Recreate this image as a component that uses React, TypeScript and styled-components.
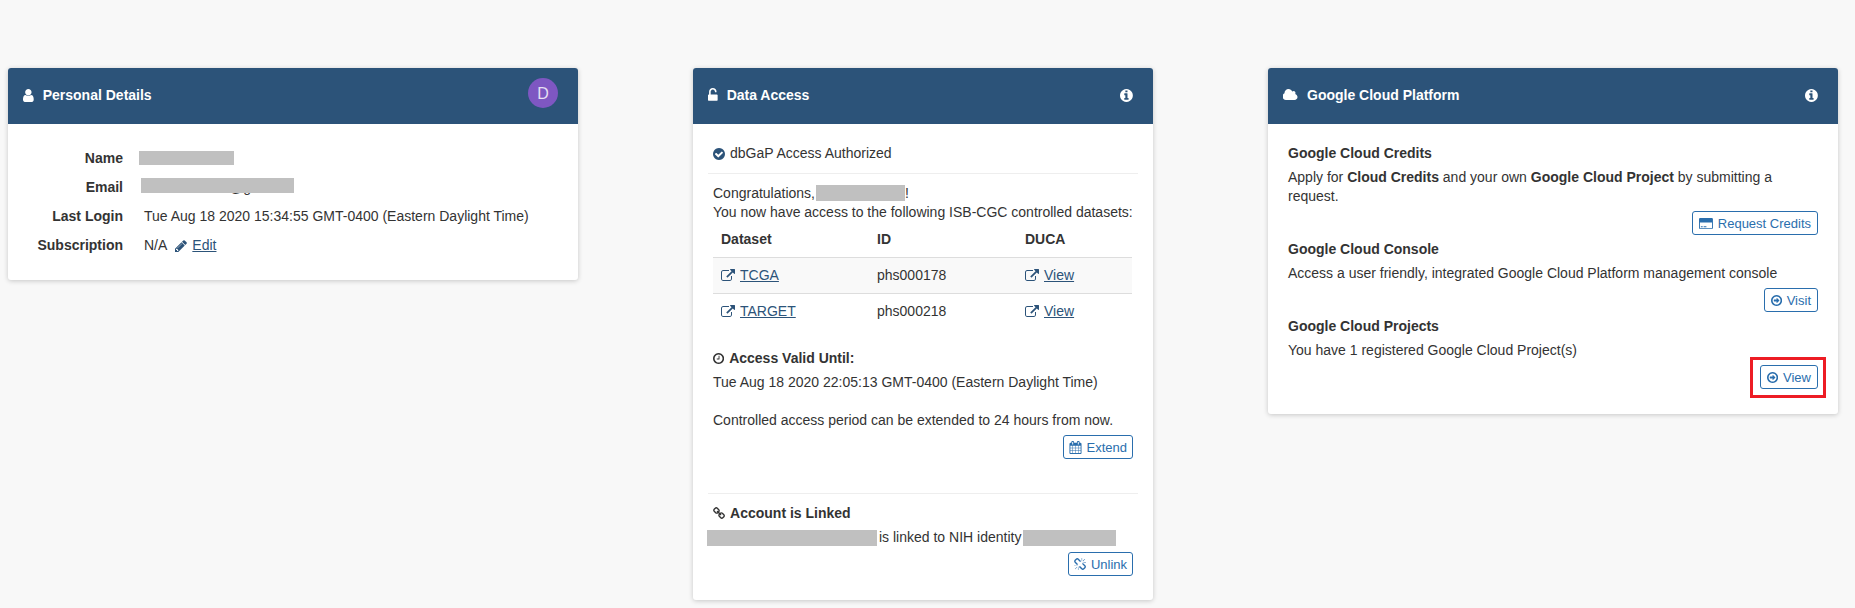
import styled, { createGlobalStyle } from 'styled-components';

// font awesome 4 glyphs: [left edge, width, path], all in the 1792 unit grid
const glyphs = {
  user: [256, 1280, 'M1536 1399q0 109-62.5 187t-150.5 78h-854q-88 0-150.5-78t-62.5-187q0-85 8.5-160.5t31.5-152 58.5-131 94-89 134.5-34.5q131 128 313 128t313-128q76 0 134.5 34.5t94 89 58.5 131 31.5 152 8.5 160.5zm-256-887q0 159-112.5 271.5t-271.5 112.5-271.5-112.5-112.5-271.5 112.5-271.5 271.5-112.5 271.5 112.5 112.5 271.5z'],
  unlock: [320, 1152, 'M1376 768q40 0 68 28t28 68v576q0 40-28 68t-68 28h-960q-40 0-68-28t-28-68v-576q0-40 28-68t68-28h32v-320q0-185 131.5-316.5t316.5-131.5 316.5 131.5 131.5 316.5q0 26-19 45t-45 19h-64q-26 0-45-19t-19-45q0-106-75-181t-181-75-181 75-75 181v320h736z'],
  info: [128, 1536, 'M1152 1376v-160q0-14-9-23t-23-9h-96v-512q0-14-9-23t-23-9h-320q-14 0-23 9t-9 23v160q0 14 9 23t23 9h96v320h-96q-14 0-23 9t-9 23v160q0 14 9 23t23 9h448q14 0 23-9t9-23zm-128-896v-160q0-14-9-23t-23-9h-192q-14 0-23 9t-9 23v160q0 14 9 23t23 9h192q14 0 23-9t9-23zm640 416q0 209-103 385.5t-279.5 279.5-385.5 103-385.5-103-279.5-279.5-103-385.5 103-385.5 279.5-279.5 385.5-103 385.5 103 279.5 279.5 103 385.5z'],
  check: [128, 1536, 'M1412 734q0-28-18-46l-91-90q-19-19-45-19t-45 19l-408 407-226-226q-19-19-45-19t-45 19l-91 90q-18 18-18 46 0 27 18 45l362 362q19 19 45 19 27 0 46-19l543-543q18-18 18-45zm252 162q0 209-103 385.5t-279.5 279.5-385.5 103-385.5-103-279.5-279.5-103-385.5 103-385.5 279.5-279.5 385.5-103 385.5 103 279.5 279.5 103 385.5z'],
  cloud: [0, 1920, 'M1856 1152q0 159-112.5 271.5t-271.5 112.5h-1088q-185 0-316.5-131.5t-131.5-316.5q0-132 71-241.5t187-163.5q-2-28-2-43 0-212 150-362t362-150q158 0 286.5 88t187.5 230q70-62 166-62 106 0 181 75t75 181q0 75-41 138 129 30 213 134.5t84 239.5z'],
  external: [0, 1792, 'M1408 928v320q0 119-84.5 203.5t-203.5 84.5h-832q-119 0-203.5-84.5t-84.5-203.5v-832q0-119 84.5-203.5t203.5-84.5h704q14 0 23 9t9 23v64q0 14-9 23t-23 9h-704q-66 0-113 47t-47 113v832q0 66 47 113t113 47h832q66 0 113-47t47-113v-320q0-14 9-23t23-9h64q14 0 23 9t9 23zm384-864v512q0 26-19 45t-45 19-45-19l-176-176-652 652q-10 10-23 10t-23-10l-114-114q-10-10-10-23t10-23l652-652-176-176q-19-19-19-45t19-45 45-19h512q26 0 45 19t19 45z'],
  pencil: [128, 1536, 'M491 1536l91-91-235-235-91 91v107h128v128h107zm523-928q0-22-22-22-10 0-17 7l-542 542q-7 7-7 17 0 22 22 22 10 0 17-7l542-542q7-7 7-17zm-54-192l416 416-832 832h-416v-416zm683 96q0 53-37 90l-166 166-416-416 166-165q36-38 90-38 53 0 91 38l235 234q37 39 37 91z'],
  clock: [128, 1536, 'M1024 544v448q0 14-9 23t-23 9h-320q-14 0-23-9t-9-23v-64q0-14 9-23t23-9h224v-352q0-14 9-23t23-9h64q14 0 23 9t9 23zm416 352q0-148-73-273t-198-198-273-73-273 73-198 198-73 273 73 273 198 198 273 73 273-73 198-198 73-273zm224 0q0 209-103 385.5t-279.5 279.5-385.5 103-385.5-103-279.5-279.5-103-385.5 103-385.5 279.5-279.5 385.5-103 385.5 103 279.5 279.5 103 385.5z'],
  link: [64, 1664, 'M1520 1216q0-40-28-68l-208-208q-28-28-68-28-42 0-72 32 3 3 19 18.5t21.5 21.5 15 19 13 25.5 3.5 27.5q0 40-28 68t-68 28q-15 0-27.5-3.5t-25.5-13-19-15-21.5-21.5-18.5-19q-33 31-33 73 0 40 28 68l206 207q27 27 68 27 40 0 68-26l147-146q28-28 28-67zm-703-705q0-40-28-68l-206-207q-28-28-68-28-39 0-68 27l-147 146q-28 28-28 67 0 40 28 68l208 208q27 27 68 27 42 0 72-31-3-3-19-18.5t-21.5-21.5-15-19-13-25.5-3.5-27.5q0-40 28-68t68-28q15 0 27.5 3.5t25.5 13 19 15 21.5 21.5 18.5 19q33-31 33-73zm895 705q0 120-85 203l-147 146q-83 83-203 83-121 0-204-85l-206-207q-83-83-83-203 0-123 88-209l-88-88q-86 88-208 88-120 0-204-84l-208-208q-84-84-84-204t85-203l147-146q83-83 203-83 121 0 204 85l206 207q83 83 83 203 0 123-88 209l88 88q86-88 208-88 120 0 204 84l208 208q84 84 84 204z'],
  calendar: [0, 1664, 'M192 1664h288v-288h-288v288zm352 0h320v-288h-320v288zm-352-352h288v-320h-288v320zm352 0h320v-320h-320v320zm-352-384h288v-288h-288v288zm736 736h320v-288h-320v288zm-384-736h320v-288h-320v288zm768 736h288v-288h-288v288zm-384-352h320v-320h-320v320zm-352-864v-288q0-13-9.5-22.5t-22.5-9.5h-64q-13 0-22.5 9.5t-9.5 22.5v288q0 13 9.5 22.5t22.5 9.5h64q13 0 22.5-9.5t9.5-22.5zm736 864h288v-320h-288v320zm-384-384h320v-288h-320v288zm384 0h288v-288h-288v288zm32-480v-288q0-13-9.5-22.5t-22.5-9.5h-64q-13 0-22.5 9.5t-9.5 22.5v288q0 13 9.5 22.5t22.5 9.5h64q13 0 22.5-9.5t9.5-22.5zm384-64v1280q0 52-38 90t-90 38h-1408q-52 0-90-38t-38-90v-1280q0-52 38-90t90-38h128v-96q0-66 47-113t113-47h64q66 0 113 47t47 113v96h384v-96q0-66 47-113t113-47h64q66 0 113 47t47 113v96h128q52 0 90 38t38 90z'],
  card: [0, 1920, 'M160 128h1600q160 0 160 160v1216q0 160-160 160h-1600q-160 0-160-160v-1216q0-160 160-160z M128 768v736q0 32 32 32h1600q32 0 32-32v-736z M256 1408v-128h256v128z M640 1408v-128h384v128z'],
  arrow: [128, 1536, 'M1280 896q0 14-9 23l-320 320q-9 9-23 9-13 0-22.5-9.5t-9.5-22.5v-192h-352q-13 0-22.5-9.5t-9.5-22.5v-192q0-13 9.5-22.5t22.5-9.5h352v-192q0-14 9-23t23-9q12 0 24 10l319 319q9 9 9 23zm160 0q0-148-73-273t-198-198-273-73-273 73-198 198-73 273 73 273 198 198 273 73 273-73 198-198 73-273zm224 0q0 209-103 385.5t-279.5 279.5-385.5 103-385.5-103-279.5-279.5-103-385.5 103-385.5 279.5-279.5 385.5-103 385.5 103 279.5 279.5 103 385.5z'],
  unlink: [64, 1664, 'M503 1271l-256 256q-10 9-23 9-12 0-23-9-9-10-9-23t9-23l256-256q10-9 23-9t23 9q9 10 9 23t-9 23zm169 41v320q0 14-9 23t-23 9-23-9-9-23v-320q0-14 9-23t23-9 23 9 9 23zm-224-224q0 14-9 23t-23 9h-320q-14 0-23-9t-9-23 9-23 23-9h320q14 0 23 9t9 23zm1264 128q0 120-85 203l-147 146q-83 83-203 83-121 0-204-85l-334-335q-21-21-42-56l239-18 273 274q27 27 68 27.5t68-26.5l147-146q28-28 28-67 0-40-28-68l-274-275 18-239q35 21 56 42l336 336q84 86 84 204zm-617-724l-239 18-273-274q-28-28-68-28-39 0-68 27l-147 146q-28 28-28 67 0 40 28 68l274 274-18 240q-35-21-56-42l-336-336q-84-86-84-204 0-120 85-203l147-146q83-83 203-83 121 0 204 85l334 335q21 21 42 56zm633 84q0 14-9 23t-23 9h-320q-14 0-23-9t-9-23 9-23 23-9h320q14 0 23 9t9 23zm-544-544v320q0 14-9 23t-23 9-23-9-9-23v-320q0-14 9-23t23-9 23 9 9 23zm407 151l-256 256q-11 9-23 9t-23-9q-9-10-9-23t9-23l256-256q10-9 23-9t23 9q9 10 9 23t-9 23z'],
} as const;

const GlobalStyle = createGlobalStyle`
  html, body {
    margin: 0;
    height: 100%;
    background: #f8f8f8;
  }
  body {
    font-family: "Liberation Sans", Arial, sans-serif;
    font-size: 14px;
    line-height: 19px;
    color: #333;
  }
`;

const Page = styled.div`
  display: flex;
  align-items: flex-start;
  gap: 115px;
  padding: 68px 0 0 8px;
`;

const Panel = styled.section<{ $width: number }>`
  width: ${(p) => p.$width}px;
  flex: none;
  background: #fff;
  border-radius: 3px;
  box-shadow: 0 1px 5px rgba(0, 0, 0, 0.2);
`;

const PanelHead = styled.header`
  height: 56px;
  box-sizing: border-box;
  display: flex;
  align-items: center;
  justify-content: space-between;
  padding: 0 20px 2px 15px;
  background: #2c5379;
  border-radius: 3px 3px 0 0;
  color: #fff;
`;

const HeadTitle = styled.h3`
  display: flex;
  align-items: center;
  gap: 9px;
  margin: 0;
  font-size: 14px;
  font-weight: bold;
`;

const Avatar = styled.span`
  width: 30px;
  height: 30px;
  margin-bottom: 4px;
  border-radius: 50%;
  background: #7e57c2;
  color: #e6dff3;
  font-size: 16px;
  display: flex;
  align-items: center;
  justify-content: center;
`;

const DetailsBody = styled.dl`
  display: grid;
  grid-template-columns: 115px 1fr;
  column-gap: 21px;
  grid-auto-rows: 29px;
  align-items: center;
  margin: 0;
  padding: 20px 0;
`;

const Label = styled.dt`
  font-weight: bold;
  text-align: right;
`;

const Value = styled.dd`
  margin: 0;
  display: flex;
  align-items: center;
  gap: 8px;
`;

const EditGroup = styled.span`
  display: flex;
  align-items: center;
  gap: 5px;
`;

const Redact = styled.span<{ $w: number; $h?: number }>`
  display: inline-block;
  flex: none;
  width: ${(p) => p.$w}px;
  height: ${(p) => p.$h ?? 16}px;
  background: #c0c0c0;
  vertical-align: middle;
`;

const NameCover = styled(Redact)`
  margin: -2px 0 0 -5px;
`;

const EmailValue = styled.dd`
  position: relative;
  margin: 0;
  padding-left: 85px;
  height: 19px;
`;

const EmailCover = styled(Redact)`
  position: absolute;
  left: -3px;
  top: 0;
`;

const TextLink = styled.a`
  color: #2c5379;
  text-decoration: underline;
`;

const Body = styled.div`
  padding: 20px 15px 0;
`;

const Indented = styled.div`
  padding: 0 5px;
`;

const Rule = styled.hr`
  border: 0;
  border-top: 1px solid #eee;
  margin: 0;
`;

const Status = styled(Indented)`
  display: flex;
  align-items: center;
  gap: 5px;
  padding-bottom: 10px;
`;

const Paragraphs = styled(Indented)`
  padding-top: 10px;
`;

const NameInline = styled(Redact)`
  margin: -3px 0 0 1px;
`;

const DataTable = styled.table`
  width: 419px;
  margin-left: 5px;
  border-collapse: collapse;
  th,
  td {
    padding: 8px;
    text-align: left;
  }
  th {
    border-bottom: 1px solid #ddd;
  }
  tbody tr:nth-child(odd) {
    background: #f9f9f9;
    border-bottom: 1px solid #ddd;
  }
  th:first-child {
    width: 140px;
  }
  th:nth-child(2) {
    width: 132px;
  }
`;

const CellLink = styled.span`
  display: flex;
  align-items: center;
  gap: 5px;
`;

const SectionTitle = styled.div`
  display: flex;
  align-items: center;
  gap: 5px;
  font-weight: bold;
`;

const ActionRow = styled.div<{ $inset?: number }>`
  display: flex;
  justify-content: flex-end;
  margin-top: 5px;
  padding-right: ${(p) => p.$inset ?? 0}px;
`;

const ActionButton = styled.button<{ $tight?: boolean }>`
  display: inline-flex;
  align-items: center;
  gap: 5px;
  height: 24px;
  box-sizing: border-box;
  padding: 0 ${(p) => (p.$tight ? 5 : 6)}px;
  background: #fff;
  border: 1px solid #2a6ead;
  border-radius: 3px;
  color: #2a6ead;
  font-family: inherit;
  font-size: 13px;
`;

const ValidBlock = styled(Indented)`
  padding-top: 20px;
  padding-bottom: 34px;
`;

const ValidDate = styled.div`
  margin-top: 5px;
  margin-bottom: 19px;
`;

const LinkedBlock = styled.div`
  padding: 10px 0 24px;
`;

const LinkedLine = styled.div`
  display: flex;
  align-items: center;
  gap: 2px;
  margin: 5px 0 0 -1px;
`;

const CloudBody = styled.div`
  padding: 20px 20px 25px;
`;

const CloudItem = styled.div`
  & + & {
    margin-top: 5px;
  }
`;

const CloudTitle = styled.h4`
  margin: 0 0 5px;
  font-size: 14px;
  line-height: 19px;
  font-weight: bold;
`;

const CloudText = styled.p`
  margin: 0;
  width: 500px;
`;

const Marked = styled.div`
  position: relative;
  display: flex;
`;

const RedMark = styled.span`
  position: absolute;
  right: -8px;
  top: -8px;
  width: 76px;
  height: 41px;
  box-sizing: border-box;
  border: 3px solid #ed1c24;
  pointer-events: none;
`;

const IconSvg = styled.svg<{ $color?: string }>`
  display: block;
  flex: none;
  fill: ${(p) => p.$color ?? 'currentColor'};
  fill-rule: evenodd;
`;

const Icon = ({ name, size, color }: { name: keyof typeof glyphs; size: number; color?: string }) => {
  const [left, width, d] = glyphs[name];
  return (
    <IconSvg
      viewBox={`${left} 0 ${width} 1792`}
      width={(width / 1792) * size}
      height={size}
      $color={color}
    >
      <path d={d} />
    </IconSvg>
  );
};

const datasets = [
  { name: 'TCGA', id: 'phs000178' },
  { name: 'TARGET', id: 'phs000218' },
];

const linkBlue = '#2c5379';

export default function App() {
  return (
    <>
      <GlobalStyle />
      <Page>
        <Panel $width={570}>
          <PanelHead>
            <HeadTitle>
              <Icon name="user" size={15} />
              Personal Details
            </HeadTitle>
            <Avatar>D</Avatar>
          </PanelHead>
          <DetailsBody>
            <Label>Name</Label>
            <Value><NameCover $w={95} $h={14} /></Value>
            <Label>Email</Label>
            <EmailValue>
              @g
              <EmailCover $w={153} $h={15} />
            </EmailValue>
            <Label>Last Login</Label>
            <Value>Tue Aug 18 2020 15:34:55 GMT-0400 (Eastern Daylight Time)</Value>
            <Label>Subscription</Label>
            <Value>
              N/A
              <EditGroup>
                <Icon name="pencil" size={14} color={linkBlue} />
                <TextLink>Edit</TextLink>
              </EditGroup>
            </Value>
          </DetailsBody>
        </Panel>

        <Panel $width={460}>
          <PanelHead>
            <HeadTitle>
              <Icon name="unlock" size={15} />
              Data Access
            </HeadTitle>
            <Icon name="info" size={15} />
          </PanelHead>
          <Body>
            <Status>
              <Icon name="check" size={14} color={linkBlue} />
              dbGaP Access Authorized
            </Status>
            <Rule />
            <Paragraphs>
              Congratulations,<NameInline $w={89} />!
              <br />
              You now have access to the following ISB-CGC controlled datasets:
            </Paragraphs>
            <DataTable>
              <thead>
                <tr>
                  <th>Dataset</th>
                  <th>ID</th>
                  <th>DUCA</th>
                </tr>
              </thead>
              <tbody>
                {datasets.map((d) => (
                  <tr key={d.id}>
                    <td>
                      <CellLink>
                        <Icon name="external" size={14} color={linkBlue} />
                        <TextLink>{d.name}</TextLink>
                      </CellLink>
                    </td>
                    <td>{d.id}</td>
                    <td>
                      <CellLink>
                        <Icon name="external" size={14} color={linkBlue} />
                        <TextLink>View</TextLink>
                      </CellLink>
                    </td>
                  </tr>
                ))}
              </tbody>
            </DataTable>
            <ValidBlock>
              <SectionTitle>
                <Icon name="clock" size={13} />
                Access Valid Until:
              </SectionTitle>
              <ValidDate>Tue Aug 18 2020 22:05:13 GMT-0400 (Eastern Daylight Time)</ValidDate>
              Controlled access period can be extended to 24 hours from now.
              <ActionRow>
                <ActionButton $tight>
                  <Icon name="calendar" size={13} />
                  Extend
                </ActionButton>
              </ActionRow>
            </ValidBlock>
            <Rule />
            <LinkedBlock>
              <Indented>
                <SectionTitle>
                  <Icon name="link" size={13} />
                  Account is Linked
                </SectionTitle>
              </Indented>
              <LinkedLine>
                <Redact $w={170} />
                is linked to NIH identity
                <Redact $w={93} />
              </LinkedLine>
              <ActionRow $inset={5}>
                <ActionButton $tight>
                  <Icon name="unlink" size={13} />
                  Unlink
                </ActionButton>
              </ActionRow>
            </LinkedBlock>
          </Body>
        </Panel>

        <Panel $width={570}>
          <PanelHead>
            <HeadTitle>
              <Icon name="cloud" size={14} />
              Google Cloud Platform
            </HeadTitle>
            <Icon name="info" size={15} />
          </PanelHead>
          <CloudBody>
            <CloudItem>
              <CloudTitle>Google Cloud Credits</CloudTitle>
              <CloudText>
                Apply for <b>Cloud Credits</b> and your own <b>Google Cloud Project</b> by submitting a request.
              </CloudText>
              <ActionRow>
                <ActionButton>
                  <Icon name="card" size={13} />
                  Request Credits
                </ActionButton>
              </ActionRow>
            </CloudItem>
            <CloudItem>
              <CloudTitle>Google Cloud Console</CloudTitle>
              <CloudText>Access a user friendly, integrated Google Cloud Platform management console</CloudText>
              <ActionRow>
                <ActionButton>
                  <Icon name="arrow" size={13} />
                  Visit
                </ActionButton>
              </ActionRow>
            </CloudItem>
            <CloudItem>
              <CloudTitle>Google Cloud Projects</CloudTitle>
              <CloudText>You have 1 registered Google Cloud Project(s)</CloudText>
              <ActionRow>
                <Marked>
                  <ActionButton>
                    <Icon name="arrow" size={13} />
                    View
                  </ActionButton>
                  <RedMark />
                </Marked>
              </ActionRow>
            </CloudItem>
          </CloudBody>
        </Panel>
      </Page>
    </>
  );
}
